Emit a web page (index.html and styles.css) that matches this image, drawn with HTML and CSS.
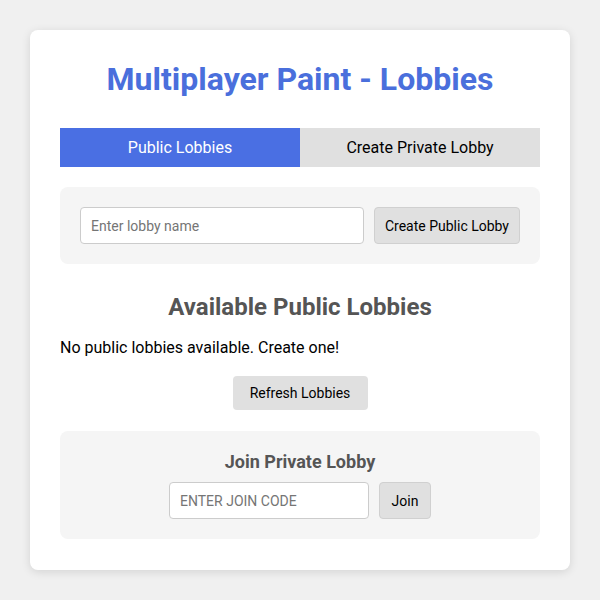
FILE: index.html
```html
<!DOCTYPE html>
<html lang="en">

<head>
    <meta charset="UTF-8">
    <meta name="viewport" content="width=device-width, initial-scale=1.0">
    <title>Multiplayer Paint - Lobbies</title>
    <link rel="stylesheet" href="styles.css">
</head>

<body>

    <div class="lobby-card">
        <h1>Multiplayer Paint - Lobbies</h1>

        <div class="tabs">
            <div class="tab active">Public Lobbies</div>
            <div class="tab">Create Private Lobby</div>
        </div>

        <div class="panel create-row">
            <input type="text" class="name-input" placeholder="Enter lobby name">
            <button type="button" class="btn">Create Public Lobby</button>
        </div>

        <h2>Available Public Lobbies</h2>
        <p class="empty">No public lobbies available. Create one!</p>
        <div class="refresh-row">
            <button type="button" class="btn refresh">Refresh Lobbies</button>
        </div>

        <div class="panel join-panel">
            <h3>Join Private Lobby</h3>
            <div class="join-row">
                <input type="text" class="code-input" placeholder="ENTER JOIN CODE">
                <button type="button" class="btn">Join</button>
            </div>
        </div>
    </div>

</body>

</html>
```

FILE: styles.css
```css
* {
    margin: 0px;
    box-sizing: border-box;
}

body {
    background-color: #f0f0f0;
    font-family: Roboto, "Liberation Sans", sans-serif;
    padding: 30px;
}

.lobby-card {
    background-color: #ffffff;
    border-radius: 8px;
    box-shadow: 0 2px 10px rgba(0, 0, 0, 0.12);
    padding: 30px;
    height: 540px;
}

h1 {
    color: #4a6fdc;
    font-size: 32px;
    font-weight: bold;
    text-align: center;
    line-height: 38px;
    margin-bottom: 30px;
}

.tabs {
    display: flex;
    margin-bottom: 20px;
}

.tab {
    flex: 1;
    height: 39px;
    line-height: 39px;
    text-align: center;
    font-size: 16px;
    background-color: #e0e0e0;
    color: #000;
}

.tab.active {
    background-color: #4a6fe3;
    color: #fff;
}

.panel {
    background-color: #f5f5f5;
    border-radius: 8px;
    padding: 20px;
}

.create-row {
    display: flex;
    gap: 10px;
}

input {
    height: 37px;
    border: 1px solid #cccccc;
    border-radius: 4px;
    padding: 0 10px;
    font-family: Roboto, "Liberation Sans", sans-serif;
    font-size: 14px;
    background: #fff;
}

input::placeholder {
    color: #757575;
}

.name-input {
    flex: 1;
}

.btn {
    height: 37px;
    padding: 0 10px;
    border: 1px solid #d0d0d0;
    border-radius: 4px;
    background-color: #e0e0e0;
    font-family: Roboto, "Liberation Sans", sans-serif;
    font-size: 14px;
    color: #000;
}

h2 {
    color: #555555;
    font-size: 24px;
    line-height: 28px;
    text-align: center;
    margin-top: 29px;
    margin-bottom: 17px;
}

.empty {
    font-size: 16px;
    line-height: 19px;
    color: #000;
}

.refresh-row {
    display: flex;
    justify-content: center;
    margin-top: 19px;
    margin-bottom: 21px;
}

.btn.refresh {
    height: 34px;
    width: 135px;
    padding: 0;
    border: none;
}

.join-panel h3 {
    color: #555555;
    font-size: 18px;
    line-height: 21px;
    text-align: center;
    margin-bottom: 10px;
}

.join-row {
    display: flex;
    justify-content: center;
    gap: 10px;
}

.code-input {
    width: 200px;
}

.join-row .btn {
    width: 52px;
    padding: 0;
}
```
